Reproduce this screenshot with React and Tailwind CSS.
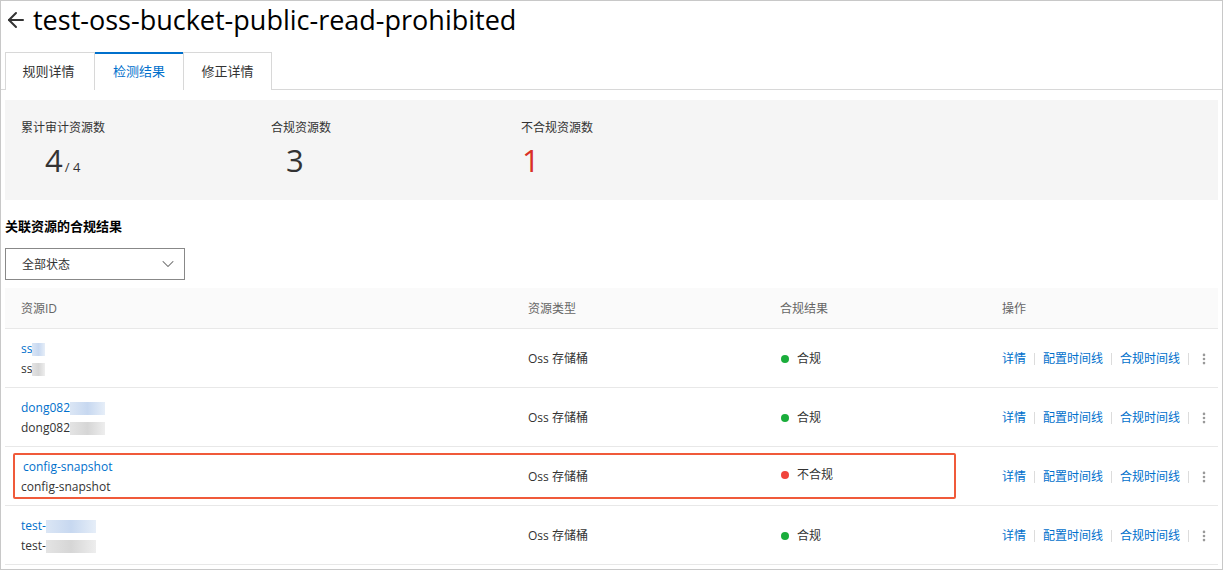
import { ArrowLeft, ChevronDown, MoreVertical } from "lucide-react";

const rows = [
  { id: "ss", blurLink: "w-[13px]", blurText: "w-[13px]", ok: true },
  { id: "dong082", blurLink: "w-[35px]", blurText: "w-[35px]", ok: true },
  { id: "config-snapshot", ok: false, highlight: true },
  { id: "test-", blurLink: "w-[50px]", blurText: "w-[50px]", ok: true },
];

function Blur({ className, tone }) {
  return (
    <span
      className={`inline-block h-[13px] align-middle ${className} ${
        tone === "blue"
          ? "bg-gradient-to-r from-[#dbe6f5] via-[#c7d8f0] to-[#e6eef8]"
          : "bg-gradient-to-r from-[#e4e4e4] via-[#d6d6d6] to-[#eeeeee]"
      }`}
    />
  );
}

function Row({ row }) {
  return (
    <div className="relative grid grid-cols-[523px_252px_222px_1fr] h-[59px] border-b border-[#e8e8e8] items-center text-[12px]">
      <div className="pl-[16px] leading-[20px] pt-[2px]">
        <div className={`text-[#0070cc] ${row.highlight ? "pl-[2px]" : ""}`}>
          {row.id}
          {row.blurLink && <Blur className={row.blurLink} tone="blue" />}
        </div>
        <div className="text-[#333]">
          {row.id}
          {row.blurText && <Blur className={row.blurText} tone="gray" />}
        </div>
      </div>
      <div className="text-[#333] pt-[2px]">Oss 存储桶</div>
      <div className={`flex items-center gap-[8px] text-[#333] ${row.ok ? "pt-[2px]" : "-mt-[2px]"}`}>
        <span
          className={`w-[8px] h-[8px] rounded-full ${row.ok ? "bg-[#1aad3b]" : "bg-[#f0443c]"} ml-[1px]`}
        />
        {row.ok ? "合规" : "不合规"}
      </div>
      <div className="flex items-center text-[#0070cc] pt-[2px]">
        <span>详情</span>
        <span className="mx-[8px] h-[12px] w-px bg-[#dcdcdc]" />
        <span>配置时间线</span>
        <span className="mx-[8px] h-[12px] w-px bg-[#dcdcdc]" />
        <span>合规时间线</span>
        <span className="mx-[8px] h-[12px] w-px bg-[#dcdcdc]" />
        <MoreVertical size={14} className="text-[#999]" strokeWidth={2.5} />
      </div>
      {row.highlight && (
        <div className="absolute left-[8px] top-[6px] w-[943px] h-[46px] border-2 border-[#f05a3a] rounded-[2px] pointer-events-none" />
      )}
    </div>
  );
}

export default function App() {
  return (
    <div
      className="w-[1223px] h-[570px] bg-white border border-[#c8c8c8] overflow-hidden"
      style={{ fontFamily: '"Open Sans", "Noto Sans CJK SC", sans-serif' }}
    >
      <div className="flex items-center h-[38px] pl-[3px]">
        <ArrowLeft size={24} strokeWidth={2} className="text-[#333]" />
        <h1 className="ml-[5px] text-[27px] text-black leading-none -mt-[2px]">
          test-oss-bucket-public-read-prohibited
        </h1>
      </div>

      <div className="mt-[13px] flex items-end h-[38px] border-b border-[#d8d8d8] pl-[4px]">
        <div className="w-[90px] h-[38px] flex items-center justify-center border border-[#d8d8d8] border-b-0 text-[13px] text-[#333] -mb-px bg-white pr-[3px]">
          规则详情
        </div>
        <div className="w-[88px] h-[38px] flex items-center justify-center border-t-2 border-t-[#0070cc] border-b border-b-white text-[13px] text-[#0070cc] -mb-px bg-white">
          检测结果
        </div>
        <div className="w-[89px] h-[38px] flex items-center justify-center border border-[#d8d8d8] border-b-0 text-[13px] text-[#333] -mb-px bg-white">
          修正详情
        </div>
      </div>

      <div className="mx-[4px] mt-[10px] h-[100px] bg-[#f5f5f5] flex pt-[19px] text-[#333]">
        <div className="w-[250px] pl-[16px]">
          <div className="text-[12px]">累计审计资源数</div>
          <div className="pl-[24px] mt-[3px] flex items-baseline">
            <span className="text-[31px] leading-[40px]">4</span>
            <span className="text-[13px] ml-[2px]">/ 4</span>
          </div>
        </div>
        <div className="w-[250px] pl-[16px]">
          <div className="text-[12px]">合规资源数</div>
          <div className="pl-[15px] mt-[3px] text-[31px] leading-[40px]">3</div>
        </div>
        <div className="w-[250px] pl-[16px]">
          <div className="text-[12px]">不合规资源数</div>
          <div className="pl-[1px] mt-[3px] text-[31px] leading-[40px] text-[#d93026]">1</div>
        </div>
      </div>

      <div className="px-[4px]">
        <div className="mt-[16px] text-[13px] font-bold text-black leading-[20px]">关联资源的合规结果</div>
        <div className="mt-[12px] w-[180px] h-[32px] border border-[#888] flex items-center justify-between pl-[16px] pr-[6px] text-[12px] text-[#333]">
          <span className="pt-[2px]">全部状态</span>
          <ChevronDown size={20} strokeWidth={1.25} className="text-[#666]" />
        </div>

        <div className="mt-[8px]">
          <div className="grid grid-cols-[523px_252px_222px_1fr] h-[41px] bg-[#fafafa] border-b border-[#e8e8e8] items-center text-[12px] text-[#666]">
            <div className="pl-[16px] pt-[1px]">资源ID</div>
            <div className="pt-[1px]">资源类型</div>
            <div className="pt-[1px]">合规结果</div>
            <div className="pt-[1px]">操作</div>
          </div>
          {rows.map((r) => (
            <Row key={r.id} row={r} />
          ))}
        </div>
      </div>
    </div>
  );
}
